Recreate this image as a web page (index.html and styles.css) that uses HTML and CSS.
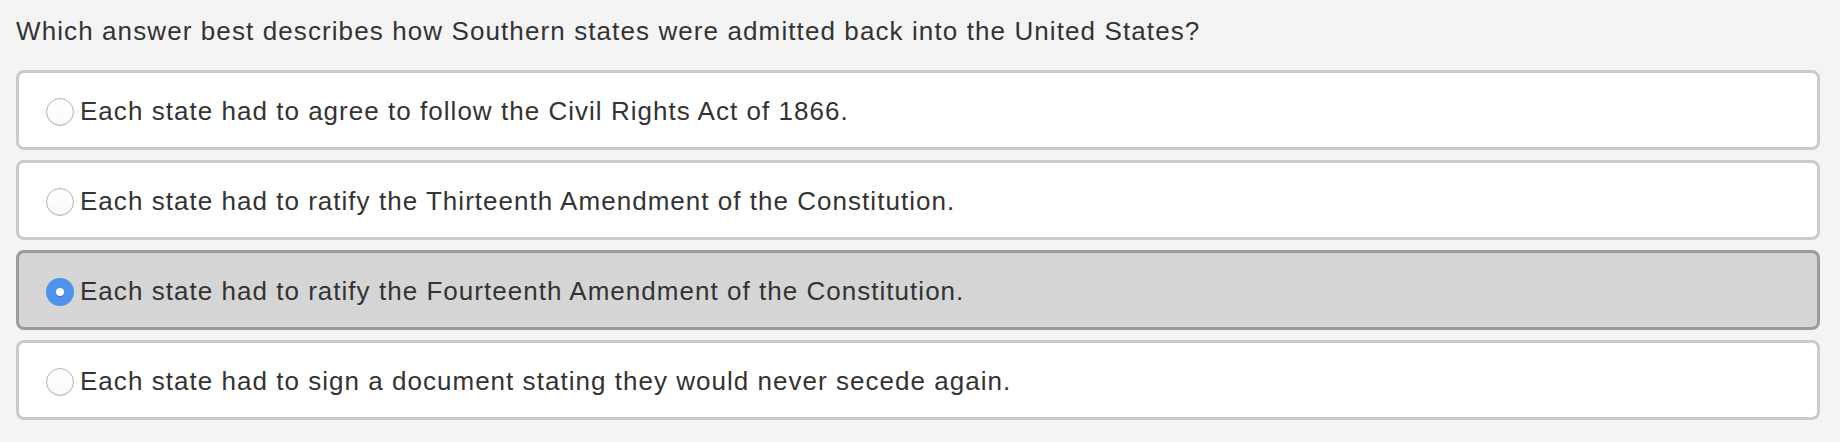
FILE: index.html
```html
<!DOCTYPE html>
<html lang="en">
<head>
<meta charset="utf-8">
<title>Question</title>
<link rel="stylesheet" href="styles.css">
</head>
<body>
<div class="question">
  <p class="prompt">Which answer best describes how Southern states were admitted back into the United States?</p>
  <ul class="choices">
    <li class="choice"><span class="radio"></span><span class="label">Each state had to agree to follow the Civil Rights Act of 1866.</span></li>
    <li class="choice"><span class="radio"></span><span class="label">Each state had to ratify the Thirteenth Amendment of the Constitution.</span></li>
    <li class="choice selected"><span class="radio"></span><span class="label">Each state had to ratify the Fourteenth Amendment of the Constitution.</span></li>
    <li class="choice"><span class="radio"></span><span class="label">Each state had to sign a document stating they would never secede again.</span></li>
  </ul>
</div>
</body>
</html>
```
FILE: styles.css
```css
html, body {
  margin: 0;
  padding: 0;
  background: #f4f4f4;
}
body {
  font-family: "Liberation Sans", Arial, Helvetica, sans-serif;
  color: #333333;
}
.question {
  padding: 16px 20px 0 16px;
}
.prompt {
  margin: 0 0 24px 0;
  font-size: 26px;
  line-height: 30px;
  letter-spacing: 1.1px;
}
.choices {
  list-style: none;
  margin: 0;
  padding: 0;
  display: flex;
  flex-direction: column;
  gap: 10px;
}
.choice {
  box-sizing: border-box;
  height: 80px;
  border: 3px solid #cbcbcb;
  border-radius: 8px;
  background: #ffffff;
  display: flex;
  align-items: center;
  padding: 2px 0 0 27px;
  font-size: 26px;
}
.choice.selected {
  background: #d5d5d5;
  border-color: #9b9b9b;
}
.radio {
  box-sizing: border-box;
  flex: none;
  width: 28px;
  height: 28px;
  border-radius: 50%;
  border: 1px solid #b4b4b4;
  background: linear-gradient(#ffffff, #fafafa);
  box-shadow: inset 0 -1px 1px rgba(0,0,0,0.08);
  margin-top: 1px;
  margin-right: 6px;
  position: relative;
}
.selected .radio {
  border: none;
  background: #4d92ec;
  box-shadow: none;
}
.selected .radio::after {
  content: "";
  position: absolute;
  left: 10px;
  top: 10px;
  width: 8px;
  height: 8px;
  border-radius: 50%;
  background: #ffffff;
  box-shadow: 0 1px 1px rgba(0,0,0,0.2);
}
.label {
  line-height: 30px;
  letter-spacing: 1.03px;
}
```
